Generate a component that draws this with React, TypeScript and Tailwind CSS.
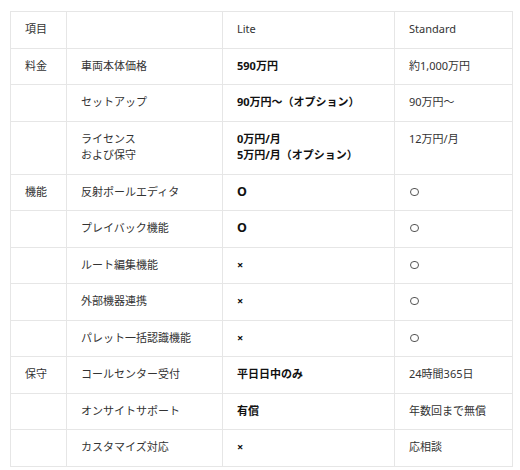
const ROWS: { cat?: string; item: string[]; lite: string[]; std: string[] }[] = [
  { cat: "料金", item: ["車両本体価格"], lite: ["590万円"], std: ["約1,000万円"] },
  { item: ["セットアップ"], lite: ["90万円～（オプション）"], std: ["90万円～"] },
  {
    item: ["ライセンス", "および保守"],
    lite: ["0万円/月", "5万円/月（オプション）"],
    std: ["12万円/月"],
  },
  { cat: "機能", item: ["反射ポールエディタ"], lite: ["O"], std: ["○"] },
  { item: ["プレイバック機能"], lite: ["O"], std: ["○"] },
  { item: ["ルート編集機能"], lite: ["×"], std: ["○"] },
  { item: ["外部機器連携"], lite: ["×"], std: ["○"] },
  { item: ["パレット一括認識機能"], lite: ["×"], std: ["○"] },
  { cat: "保守", item: ["コールセンター受付"], lite: ["平日日中のみ"], std: ["24時間365日"] },
  { item: ["オンサイトサポート"], lite: ["有償"], std: ["年数回まで無償"] },
  { item: ["カスタマイズ対応"], lite: ["×"], std: ["応相談"] },
];

const cell = "border border-[#e6e6e6] pl-[14px] pr-2 pt-[9px] pb-[10px] align-top text-left";

function Lines({ lines }: { lines: string[] }) {
  return (
    <>
      {lines.map((l, i) => {
        if (l === "○")
          // the open circle is smaller than the CJK full-width glyph
          return (
            <div key={i} className="h-[16.5px] flex items-center">
              <span className="inline-block w-[9px] h-[8px] ml-[1px] rounded-full border border-[#555]" />
            </div>
          );
        if (l === "O")
          return (
            <div key={i} className="text-[12.5px]">
              O
            </div>
          );
        return <div key={i}>{l}</div>;
      })}
    </>
  );
}

export default function App() {
  return (
    <div
      className="w-[520px] h-[470px] bg-white pt-[11px] pl-[10px]"
      style={{ fontFamily: '"Noto Sans", "Noto Sans CJK JP", sans-serif' }}
    >
      <table className="w-[502px] table-fixed border-collapse text-[11px] leading-[16.5px] text-[#333]">
        <colgroup>
          <col className="w-[56px]" />
          <col className="w-[156px]" />
          <col className="w-[172px]" />
          <col className="w-[118px]" />
        </colgroup>
        <thead>
          <tr>
            <th className={`${cell} font-normal`}>項目</th>
            <th className={`${cell} font-normal`}></th>
            <th className={`${cell} font-normal`}>Lite</th>
            <th className={`${cell} font-normal`}>Standard</th>
          </tr>
        </thead>
        <tbody>
          {ROWS.map((r, i) => (
            <tr key={i}>
              <td className={cell}>{r.cat}</td>
              <td className={cell}>
                <Lines lines={r.item} />
              </td>
              <td className={`${cell} font-bold text-[#111]`}>
                <Lines lines={r.lite} />
              </td>
              <td className={cell}>
                <Lines lines={r.std} />
              </td>
            </tr>
          ))}
        </tbody>
      </table>
    </div>
  );
}
